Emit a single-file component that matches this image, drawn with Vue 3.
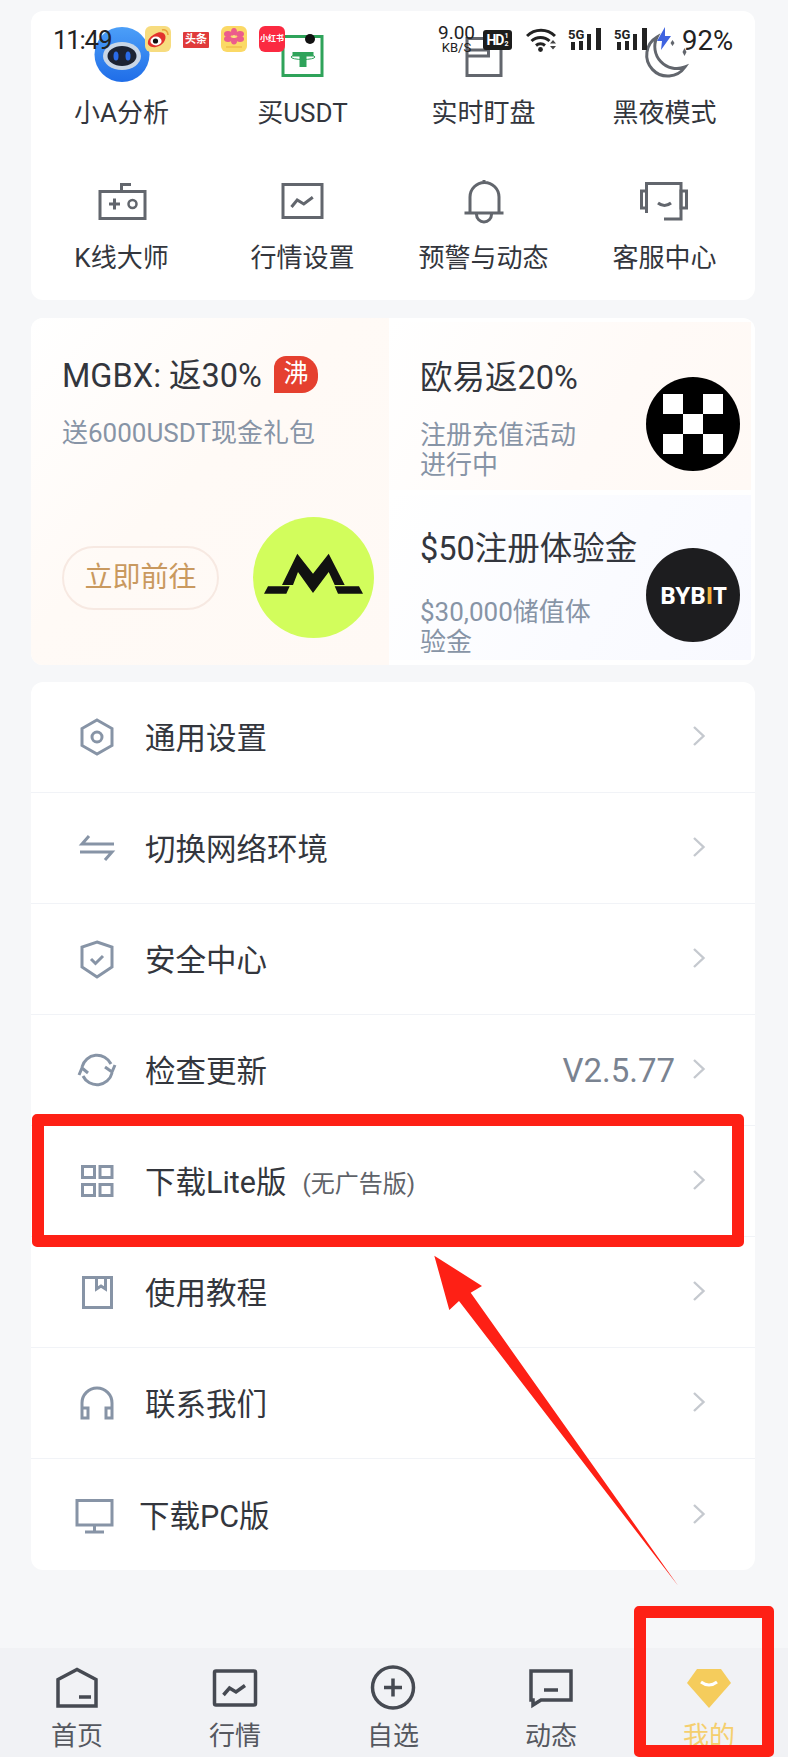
<template>
  <div class="page">
    <div class="status">
      <span class="time">11:49</span>
      <div class="app weibo">
        <svg viewBox="0 0 26 26" width="26" height="26">
          <path d="M10 8c4-3 9-2 10 1 2 4-2 11-9 12-5 1-9-2-8-5 0-3 3-6 7-8z" fill="#e2322d" />
          <ellipse cx="11" cy="15" rx="5.6" ry="4.4" fill="#fff" />
          <circle cx="10.5" cy="15" r="2.6" fill="#111" />
          <path d="M17 4c3-1 6 1 6 5" fill="none" stroke="#e8a33a" stroke-width="1.6" />
        </svg>
      </div>
      <span class="app toutiao">头条</span>
      <div class="app flower">
        <svg viewBox="0 0 26 26" width="26" height="26">
          <ellipse cx="13" cy="6" rx="3" ry="4" fill="#ec5c8c" />
          <ellipse cx="7" cy="8" rx="4" ry="3" fill="#ec5c8c" />
          <ellipse cx="19" cy="8" rx="4" ry="3" fill="#ec5c8c" />
          <ellipse cx="7" cy="13" rx="4" ry="3" fill="#ec5c8c" />
          <ellipse cx="19" cy="13" rx="4" ry="3" fill="#ec5c8c" />
          <ellipse cx="13" cy="15" rx="3" ry="3.4" fill="#ec5c8c" />
          <circle cx="13" cy="10.5" r="1.6" fill="#fbe08a" />
          <rect x="5" y="20" width="16" height="2" fill="#f3c552" />
        </svg>
      </div>
      <span class="app redbook">小红书</span>

      <div class="speed">
        <span class="speed-num">9.00</span>
        <span class="speed-unit">KB/S</span>
      </div>
      <div class="hd">HD<span class="hd-sub">1<br />2</span></div>
      <svg class="wifi" viewBox="0 0 30 24" width="30" height="24">
        <path d="M1 8a20 20 0 0 1 28 0M5.500 13a13 13 0 0 1 18 0M10 17.500a7 7 0 0 1 9 0" fill="none" stroke="#222" stroke-width="3" />
        <circle cx="14.500" cy="21.500" r="2.400" fill="#222" />
        <path d="M24 15.500l3 -3.500 3 3.500zM24 18l3 3.500 3 -3.500z" fill="#444" />
      </svg>
      <svg class="sig" viewBox="0 0 34 24" width="34" height="24">
        <text x="0" y="12" class="sig-text">5G</text>
        <rect x="3" y="15" width="4" height="8" fill="#222" />
        <rect x="11" y="14" width="4" height="9" fill="#222" />
        <rect x="19" y="7" width="4" height="16" fill="#222" />
        <rect x="28" y="1" width="5" height="22" fill="#222" />
      </svg>
      <svg class="sig second" viewBox="0 0 34 24" width="34" height="24">
        <text x="0" y="12" class="sig-text">5G</text>
        <rect x="3" y="15" width="4" height="8" fill="#222" />
        <rect x="11" y="14" width="4" height="9" fill="#222" />
        <rect x="19" y="7" width="4" height="16" fill="#222" />
        <rect x="28" y="1" width="5" height="22" fill="#222" />
      </svg>
      <svg class="bolt" viewBox="0 0 16 24" width="16" height="24">
        <path d="M9 0L1 14h5l-1 9 10-14H9z" fill="#3f63e0" />
      </svg>
      <span class="battery">92%</span>
    </div>

    <section class="card tools">
      <div class="tool">
        <svg class="tool-icon" viewBox="0 0 60 56">
          <defs>
            <linearGradient id="botBg" x1="0" y1="0" x2="0" y2="1">
              <stop offset="0" stop-color="#4c9ff8" />
              <stop offset="1" stop-color="#1f6de8" />
            </linearGradient>
          </defs>
          <circle cx="30" cy="26.500" r="27.500" fill="url(#botBg)" />
          <ellipse cx="30" cy="28" rx="19" ry="14" fill="#c9d6e6" />
          <ellipse cx="30" cy="28" rx="14.500" ry="10" fill="#1c2333" />
          <ellipse cx="24" cy="28" rx="2.500" ry="4.500" fill="#2a6be8" />
          <ellipse cx="36" cy="28" rx="2.500" ry="4.500" fill="#2a6be8" />
        </svg>
        <span class="tool-label">小A分析</span>
      </div>
      <div class="tool">
        <svg class="tool-icon" viewBox="0 0 60 56">
          <rect x="10" y="8.500" width="39" height="39" fill="none" stroke="#2fa35a" stroke-width="3" />
          <path d="M19.500 24h21v4.500h-7v10.500h-7v-10.500h-7z" fill="#2fa35a" />
          <ellipse cx="30" cy="29" rx="12" ry="2.500" fill="none" stroke="#2fa35a" stroke-width="1" />
        </svg>
        <span class="tool-label">买USDT</span>
      </div>
      <div class="tool">
        <svg class="tool-icon" viewBox="0 0 60 56" fill="none" stroke="#62666d" stroke-width="3">
          <rect x="13" y="10.500" width="34" height="37" />
          <path d="M13 28h21.500v-17.500M13 22h21" />
        </svg>
        <span class="tool-label">实时盯盘</span>
      </div>
      <div class="tool">
        <svg class="tool-icon" viewBox="0 0 60 56" fill="none" stroke="#62666d" stroke-width="3">
          <path d="M22 9A21 21 0 1 0 50 39A22 22 0 0 1 22 9Z" />
          <path d="M49.500 20l2 4 -2 4 -2 -4zM37.500 12l2 3 -2 3 -2 -3z" fill="#62666d" stroke="none" />
        </svg>
        <span class="tool-label">黑夜模式</span>
      </div>
      <div class="tool">
        <svg class="tool-icon" viewBox="0 0 60 56" fill="none" stroke="#62666d" stroke-width="3">
          <rect x="8" y="18.500" width="45" height="27" />
          <path d="M29.500 18v-6.500h9.500M22.500 25.500v11M17 31h11" />
          <circle cx="40.500" cy="31" r="4" stroke-width="2.500" />
        </svg>
        <span class="tool-label">K线大师</span>
      </div>
      <div class="tool">
        <svg class="tool-icon" viewBox="0 0 60 56" fill="none" stroke="#62666d" stroke-width="3">
          <rect x="10" y="11.500" width="39" height="33" />
          <path d="M18.500 34l5.700 -7 6.600 4 9 -6.700" />
        </svg>
        <span class="tool-label">行情设置</span>
      </div>
      <div class="tool">
        <svg class="tool-icon" viewBox="0 0 60 56" fill="none" stroke="#62666d" stroke-width="3">
          <path d="M16 40V24a14.500 14.500 0 0 1 29 0V40M10.500 40h39M22.500 41.500a7.500 7.500 0 0 0 15 0M30 7v3" />
        </svg>
        <span class="tool-label">预警与动态</span>
      </div>
      <div class="tool">
        <svg class="tool-icon" viewBox="0 0 60 56" fill="none" stroke="#62666d" stroke-width="3">
          <path d="M11.500 40V10.500H46V46H29M23 30q6.500 5 13 0" />
          <rect x="6.500" y="18" width="5" height="17" />
          <rect x="46" y="18" width="5.500" height="17" />
        </svg>
        <span class="tool-label">客服中心</span>
      </div>
    </section>

    <section class="card promo">
      <div class="promo-main">
        <div class="promo-title">MGBX: 返30%<span class="hot">沸</span></div>
        <div class="promo-sub main-sub">送6000USDT现金礼包</div>
        <div class="promo-foot">
          <span class="go">立即前往</span>
          <svg class="logo-m" viewBox="0 0 121 121" width="121" height="121">
            <circle cx="60.500" cy="60.500" r="60.500" fill="#d2fd5c" />
            <path d="M29 68L44.300 36.700L60 56.700L75.700 36.700L91.700 68H81.700L75.700 55L60 76L45 55L40 68Z" fill="#111" />
            <path d="M11 76.700L15 69.300H36.700L33.300 76.700ZM81.700 69.300H106L110 76.700H85Z" fill="#111" />
          </svg>
        </div>
      </div>
      <div class="promo-side">
        <div class="side-item okx-item">
          <div class="side-text">
            <div class="promo-title">欧易返20%</div>
            <div class="promo-sub">注册充值活动进行中</div>
          </div>
          <div class="okx">
            <i></i><b></b><i></i>
            <b></b><i></i><b></b>
            <i></i><b></b><i></i>
          </div>
        </div>
        <div class="side-item bybit-item">
          <div class="side-text">
            <div class="promo-title">$50注册体验金</div>
            <div class="promo-sub">$30,000储值体验金</div>
          </div>
          <div class="bybit">BYB<span class="bybit-i">I</span>T</div>
        </div>
      </div>
    </section>

    <section class="card menu">
      <div v-for="row in rows" :key="row.label" class="row" :class="{ 'row-pc': row.pc }">
        <svg class="row-icon" viewBox="0 0 40 40" width="40" height="40">
          <path :d="row.d" fill="none" stroke="#8794a6" stroke-width="3" />
        </svg>
        <span class="row-label">{{ row.label }}</span>
        <span v-if="row.sub" class="row-sub">{{ row.sub }}</span>
        <span v-if="row.value" class="row-value">{{ row.value }}</span>
        <svg class="chevron" viewBox="0 0 14 22" width="14" height="22">
          <path d="M2 2l9.500 9L2 20" fill="none" stroke="#c5c9cf" stroke-width="2.400" />
        </svg>
      </div>
    </section>

    <nav class="tabs">
      <div class="tab">
        <svg viewBox="0 0 48 48" width="48" height="48" fill="none" stroke="#464a52" stroke-width="3.500">
          <path d="M5 42V15.500L24 5.500L43 15.500V42ZM26 33H38" />
        </svg>
        <span>首页</span>
      </div>
      <div class="tab">
        <svg viewBox="0 0 48 48" width="48" height="48" fill="none" stroke="#464a52" stroke-width="3.500">
          <rect x="3.500" y="7" width="41" height="34" rx="1.500" />
          <path d="M12.500 31l6 -7 6.500 4 9 -6.500" />
        </svg>
        <span>行情</span>
      </div>
      <div class="tab">
        <svg viewBox="0 0 48 48" width="48" height="48" fill="none" stroke="#464a52" stroke-width="3.500">
          <circle cx="24" cy="23.500" r="20.500" />
          <path d="M24 14.500v18M15 23.500h18" />
        </svg>
        <span>自选</span>
      </div>
      <div class="tab">
        <svg viewBox="0 0 48 48" width="48" height="48" fill="none" stroke="#464a52" stroke-width="3.500">
          <path d="M4 7H44V36H14L6 41V36H4ZM17 26H31" />
        </svg>
        <span>动态</span>
      </div>
      <div class="tab active">
        <svg viewBox="0 0 48 48" width="48" height="48">
          <path d="M12 5H36L46 19L24 44L2 19Z" fill="#f5cc5c" />
          <path d="M16 18q8 6 16 0" fill="none" stroke="#fff" stroke-width="3" />
        </svg>
        <span>我的</span>
      </div>
    </nav>

    <i class="camera"></i>
    <div class="mark mark-lite"></div>
    <div class="mark mark-tab"></div>
    <svg class="arrow" viewBox="0 0 788 1758" width="788" height="1758">
      <path d="M434.300 1255.700L482 1286L470.700 1292.700L678.300 1586L459 1301L449.300 1310Z" fill="#fe2015" />
    </svg>
  </div>
</template>

<script setup>
const rows = [
  {
    label: '通用设置',
    d: 'M20 3L35 11.500V28.500L20 37L5 28.500V11.500ZM25 20a5 5 0 1 1 -10 0a5 5 0 1 1 10 0Z'
  },
  { label: '切换网络环境', d: 'M12 8L5 16H37M28 32L35 24H3' },
  {
    label: '安全中心',
    d: 'M20 3L35 8V28L20 38L5 28V8ZM14 20l4.500 4.500l7.500 -7.500'
  },
  {
    label: '检查更新',
    value: 'V2.5.77',
    d: 'M5 17A15.500 15.500 0 0 1 34 14M35 23A15.500 15.500 0 0 1 6 26M28 17L35 22L38 15M2 25L5 18L11 23'
  },
  {
    label: '下载Lite版',
    sub: '(无广告版)',
    d: 'M5.500 5.500H17.500V16.500H5.500ZM23 5.500H35V16.500H23ZM5.500 23.500H17.500V34.500H5.500ZM23 23.500H35V34.500H23Z'
  },
  {
    label: '使用教程',
    d: 'M6.500 5.500H34.500V35.500H6.500ZM19.500 5.500V17L24 14L28.500 17V5.500'
  },
  {
    label: '联系我们',
    d: 'M5 26V20a15 15 0 0 1 30 0V26M5 25H11V35H5ZM29 25H35V35H29Z'
  },
  {
    label: '下载PC版',
    pc: true,
    d: 'M2 5.500H37V30H2ZM19.500 30V37M10 37H29'
  }
]
</script>

<style scoped>
.page {
  position: relative;
  display: flex;
  flex-direction: column;
  width: 788px;
  height: 1758px;
  overflow: hidden;
  background: #f6f7f9;
  color: #33363d;
  font-family: Roboto, "Noto Sans CJK SC", sans-serif;
}

.card {
  margin: 0 33px 0 31px;
  border-radius: 12px;
  background: #fff;
}

/* status bar lies over the page */
.status {
  position: absolute;
  top: 0;
  left: 0;
  z-index: 3;
  display: flex;
  align-items: flex-start;
  width: 788px;
  height: 60px;
  padding-left: 53px;
  box-sizing: border-box;
  color: #222;
}

.time {
  width: 58px;
  margin: 23px 34px 0 0;
  font-size: 26px;
  line-height: 34px;
  letter-spacing: -1.3px;
}

.app {
  flex: none;
  width: 26px;
  height: 26px;
  margin: 26px 12px 0 0;
  border-radius: 6px;
  overflow: hidden;
}

.weibo {
  background: #f7dc7f;
}

.flower {
  background: #fbd966;
}

.toutiao {
  height: 16px;
  margin-top: 32px;
  border-radius: 1px;
  background: #e03a3a;
  color: #fff;
  font-size: 11px;
  font-weight: 700;
  line-height: 16px;
  text-align: center;
}

.redbook {
  background: #fb2a41;
  color: #fff;
  font-size: 8px;
  font-weight: 700;
  line-height: 26px;
  text-align: center;
  white-space: nowrap;
}

.speed {
  display: flex;
  flex-direction: column;
  align-items: center;
  width: 37px;
  margin: 23px 0 0 141px;
}

.speed-num {
  font-size: 19px;
  line-height: 19px;
}

.speed-unit {
  font-size: 13px;
  line-height: 12px;
}

.hd {
  display: flex;
  align-items: center;
  justify-content: center;
  width: 29px;
  height: 20px;
  margin: 30px 0 0 8px;
  border-radius: 3px;
  background: #1c1c1c;
  color: #fff;
  font-size: 14px;
  font-weight: 700;
  letter-spacing: -1px;
}

.hd-sub {
  margin-left: 1px;
  font-size: 7px;
  line-height: 8px;
  letter-spacing: 0;
}

.wifi {
  margin: 28px 0 0 14px;
}

.sig {
  margin: 27px 0 0 12px;
}

.sig-text {
  font-size: 13px;
  font-weight: 700;
  fill: #222;
}

.bolt {
  margin: 27px 0 0 8px;
}

.battery {
  margin: 24px 0 0 10px;
  font-size: 27.500px;
  line-height: 34px;
}

/* tools grid */
.tools {
  display: grid;
  grid-template-columns: repeat(4, 1fr);
  grid-template-rows: 145px 144px;
  margin-top: 11px;
}

.tool {
  display: flex;
  flex-direction: column;
  align-items: center;
  padding-top: 17px;
}

.tool-icon {
  flex: none;
  width: 60px;
  height: 56px;
  margin-bottom: 11px;
  overflow: visible;
}

.tool-label {
  font-size: 26px;
  line-height: 36px;
  white-space: nowrap;
}

/* promo */
.promo {
  display: flex;
  height: 347px;
  margin-top: 18px;
  overflow: hidden;
}

.promo-main {
  display: flex;
  flex: 0 0 358px;
  flex-direction: column;
  box-sizing: border-box;
  padding: 38px 0 27px 31px;
  background: linear-gradient(135deg, #fff 0%, #fffaf6 45%, #fff9f5 100%);
}

.promo-title {
  display: flex;
  align-items: center;
  font-size: 32.500px;
  line-height: 40px;
  white-space: nowrap;
}

.hot {
  display: inline-block;
  flex: none;
  width: 44px;
  height: 37px;
  margin: -4px 0 0 12px;
  border-radius: 12px 18px 16px 0;
  background: #e5402f;
  color: #fff;
  font-size: 25px;
  line-height: 36px;
  text-align: center;
}

.promo-sub {
  margin-top: 22px;
  color: #8794a6;
  font-size: 26px;
  line-height: 30px;
}

.promo-foot {
  display: flex;
  align-items: center;
  margin-top: auto;
}

.go {
  box-sizing: border-box;
  width: 157px;
  height: 64px;
  border: 2px solid #f7e9e2;
  border-radius: 32px;
  color: #c9995f;
  font-size: 28px;
  line-height: 60px;
  text-align: center;
}

.logo-m {
  margin-left: 34px;
}

.promo-side {
  display: flex;
  flex: 1;
  flex-direction: column;
  gap: 5px;
  padding: 4px 4px 5px 0;
}

.side-item {
  display: flex;
  flex: 1;
  padding: 36px 11px 0 31px;
}

.okx-item {
  background: linear-gradient(120deg, #fff 0%, #fffaf7 60%, #fff9f5 100%);
}

.bybit-item {
  padding-top: 34px;
  background: linear-gradient(120deg, #fff 0%, #fafbff 60%, #f8f9ff 100%);
}

.bybit-item .promo-sub {
  margin-top: 28px;
}

.side-text {
  width: 176px;
}

.okx {
  display: grid;
  grid-template-columns: repeat(3, 20px);
  grid-template-rows: repeat(3, 20px);
  box-sizing: border-box;
  width: 94px;
  height: 94px;
  margin: 19px 0 0 auto;
  padding: 17px;
  border-radius: 50%;
  background: #000;
}

.okx i {
  background: #fff;
}

.bybit {
  box-sizing: border-box;
  width: 94px;
  height: 94px;
  margin: 19px 0 0 auto;
  border-radius: 50%;
  background: #1d1d1f;
  color: #fff;
  font-family: "Open Sans", sans-serif;
  font-size: 24px;
  font-weight: 700;
  letter-spacing: -0.5px;
  line-height: 94px;
  text-align: center;
}

.bybit-i {
  color: #f2b33d;
}

/* menu */
.menu {
  height: 888px;
  margin-top: 17px;
  overflow: hidden;
}

.row {
  display: flex;
  align-items: center;
  box-sizing: border-box;
  height: 111px;
  padding: 0 49px 0 46px;
  border-bottom: 1px solid #f1f3f7;
}

.row:last-child {
  border-bottom: 0;
}

.row-icon {
  flex: none;
  margin-right: 28px;
}

.row-pc .row-icon {
  margin: 0 24px 0 -2px;
}

.row-label {
  margin-top: -2px;
  font-size: 30.500px;
}

.row-sub {
  margin-left: 16px;
  color: #5f6369;
  font-size: 24px;
}

.row-value {
  margin-left: auto;
  color: #7a8391;
  font-size: 33px;
}

.chevron {
  flex: none;
  margin: -2px 0 0 auto;
}

.row-value + .chevron {
  margin-left: 17px;
}

/* tab bar */
.tabs {
  display: flex;
  margin-top: auto;
  height: 110px;
  box-sizing: border-box;
  padding-top: 16px;
  border-bottom: 1px solid #fff;
  background: #f1f2f5;
}

.tab {
  display: flex;
  flex: 0 0 158px;
  flex-direction: column;
  align-items: center;
  gap: 9px;
  color: #55585f;
  font-size: 26px;
  line-height: 30px;
}

.tab:first-child {
  margin-left: -2px;
}

.tab svg {
  flex: none;
}

.tab.active {
  color: #f5cf6e;
}

/* camera hole and the red annotations on top of the shot */
.camera {
  position: absolute;
  top: 34px;
  left: 305px;
  z-index: 3;
  width: 10px;
  height: 10px;
  border-radius: 50%;
  background: #111;
}

.mark {
  position: absolute;
  z-index: 4;
  box-sizing: border-box;
  border: 12px solid #fe2015;
  border-radius: 5px;
}

.mark-lite {
  top: 1114px;
  left: 32px;
  width: 712px;
  height: 133px;
}

.mark-tab {
  top: 1606px;
  left: 634px;
  width: 140px;
  height: 151px;
}

.arrow {
  position: absolute;
  top: 0;
  left: 0;
  z-index: 4;
  pointer-events: none;
}
</style>
